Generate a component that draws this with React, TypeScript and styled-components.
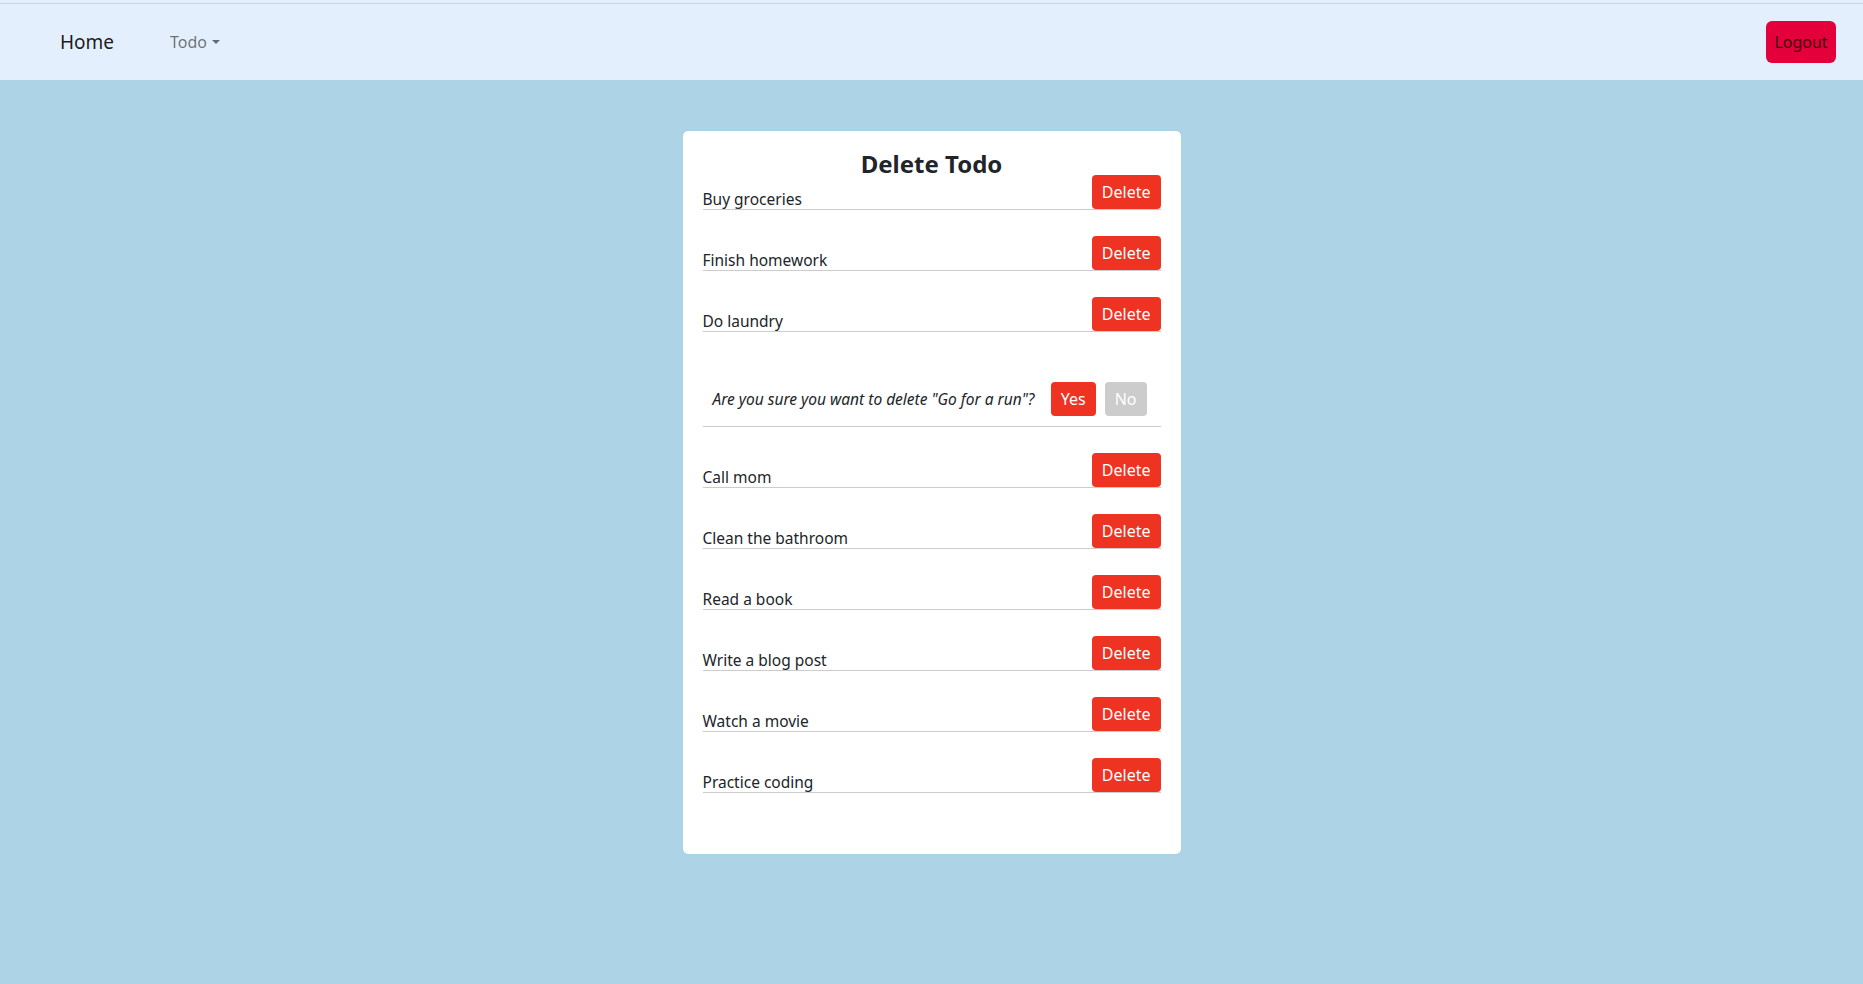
import React, {useState} from "react";
import styled, {createGlobalStyle} from "styled-components";

const TODOS = [
  "Buy groceries",
  "Finish homework",
  "Do laundry",
  "Go for a run",
  "Call mom",
  "Clean the bathroom",
  "Read a book",
  "Write a blog post",
  "Watch a movie",
  "Practice coding",
];

const GlobalStyle = createGlobalStyle`
  html, body {
    margin: 0;
    padding: 0;
    background-color: #add4e6;
    font-family: "Noto Sans", "Open Sans", sans-serif;
    color: #212529;
  }
  * {
    box-sizing: border-box;
  }
`;

const App = () => {
  const [confirming, setConfirming] = useState<string | null>("Go for a run");
  const [todos, setTodos] = useState<string[]>(TODOS);

  const onDelete = (todo: string) => {
    setTodos((list) => list.filter((item) => item !== todo));
    setConfirming(null);
  };

  return (
    <>
      <GlobalStyle />
      <StyledTopStrip />
      <StyledNavbar>
        <StyledNavLeft>
          <StyledBrand href="#">Home</StyledBrand>
          <StyledDropdown>
            Todo
            <StyledCaret />
          </StyledDropdown>
        </StyledNavLeft>
        <StyledLogout>Logout</StyledLogout>
      </StyledNavbar>

      <StyledMain>
        <StyledCard>
          <StyledTitle>Delete Todo</StyledTitle>
          <StyledList>
            {todos.map((todo, index) =>
              todo === confirming ? (
                <StyledConfirmRow key={todo}>
                  <StyledQuestion>
                    Are you sure you want to delete "{todo}"?
                  </StyledQuestion>
                  <StyledButton onClick={() => onDelete(todo)}>Yes</StyledButton>
                  <StyledButton
                    variant="muted"
                    onClick={() => setConfirming(null)}
                  >
                    No
                  </StyledButton>
                </StyledConfirmRow>
              ) : (
                <StyledRow key={todo} first={index === 0}>
                  <StyledLabel>{todo}</StyledLabel>
                  <StyledButton onClick={() => setConfirming(todo)}>
                    Delete
                  </StyledButton>
                </StyledRow>
              )
            )}
          </StyledList>
        </StyledCard>
      </StyledMain>
    </>
  );
};

export default App;

const StyledTopStrip = styled.div`
  height: 4px;
  background-color: #e3effc;
  border-bottom: 1px solid #cfd3d8;
`;

const StyledNavbar = styled.nav`
  height: 76px;
  display: flex;
  align-items: center;
  justify-content: space-between;
  padding: 0 27px 0 60px;
  background-color: #e3effc;
`;

const StyledNavLeft = styled.div`
  display: flex;
  align-items: center;
  gap: 56px;
`;

const StyledBrand = styled.a`
  font-size: 19px;
  color: rgba(0, 0, 0, 0.9);
  text-decoration: none;
`;

const StyledDropdown = styled.div`
  display: flex;
  align-items: center;
  gap: 5px;
  font-size: 16px;
  color: rgba(0, 0, 0, 0.55);
  cursor: pointer;
`;

const StyledCaret = styled.span`
  width: 0;
  height: 0;
  border-left: 4px solid transparent;
  border-right: 4px solid transparent;
  border-top: 4px solid rgba(0, 0, 0, 0.55);
`;

const StyledLogout = styled.button`
  width: 70px;
  height: 42px;
  border: none;
  border-radius: 6px;
  background-color: #e4003a;
  color: #45000f;
  font-family: inherit;
  font-size: 16px;
  cursor: pointer;
`;

const StyledMain = styled.main`
  display: flex;
  justify-content: center;
  padding: 51px 0 130px;
`;

const StyledCard = styled.section`
  width: 498px;
  height: 723px;
  padding: 21px 20px 0;
  background-color: white;
  border-radius: 5px;
  box-shadow: 0 0 1px rgba(0, 0, 0, 0.15);
`;

const StyledTitle = styled.h2`
  margin: 0;
  font-size: 24px;
  line-height: 23px;
  font-weight: 700;
  text-align: center;
  color: #212529;
`;

const StyledList = styled.ul`
  list-style: none;
  margin: 0;
  padding: 0;
`;

const StyledRow = styled.li<{first: boolean}>`
  display: flex;
  justify-content: space-between;
  align-items: flex-end;
  padding-top: ${(props) => (props.first ? "0" : "26px")};
  border-bottom: 1px solid #cccccc;
`;

const StyledConfirmRow = styled.li`
  display: flex;
  align-items: center;
  justify-content: flex-end;
  gap: 9px;
  padding: 50px 14px 10px 10px;
  border-bottom: 1px solid #cccccc;
`;

const StyledLabel = styled.span`
  font-size: 15.5px;
  line-height: 19px;
`;

const StyledQuestion = styled.em`
  flex: 1;
  min-width: 0;
  white-space: nowrap;
  font-size: 15.5px;
  line-height: 22px;
`;

const StyledButton = styled.button<{variant?: "muted"}>`
  flex-shrink: 0;
  height: 34px;
  padding: 0 10px;
  border: none;
  border-radius: 4px;
  background-color: ${(props) =>
    props.variant === "muted" ? "#cccccc" : "#ee3322"};
  color: white;
  font-family: inherit;
  font-size: 16px;
  cursor: pointer;
`;
